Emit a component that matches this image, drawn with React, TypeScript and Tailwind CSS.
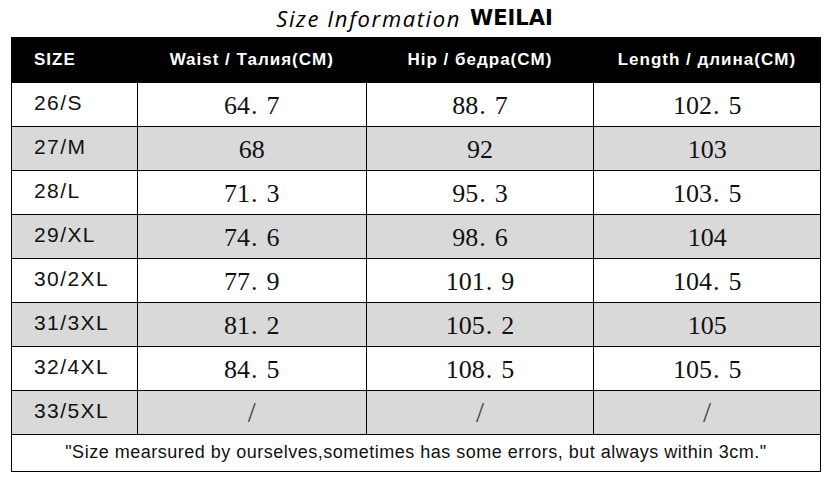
const rows = [
  { size: '26/S', waist: '64.7', hip: '88.7', length: '102.5' },
  { size: '27/M', waist: '68', hip: '92', length: '103' },
  { size: '28/L', waist: '71.3', hip: '95.3', length: '103.5' },
  { size: '29/XL', waist: '74.6', hip: '98.6', length: '104' },
  { size: '30/2XL', waist: '77.9', hip: '101.9', length: '104.5' },
  { size: '31/3XL', waist: '81.2', hip: '105.2', length: '105' },
  { size: '32/4XL', waist: '84.5', hip: '108.5', length: '105.5' },
  { size: '33/5XL', waist: '/', hip: '/', length: '/' },
];

const sans = "font-['Liberation_Sans',Arial,sans-serif]";
const num = "font-['Liberation_Serif',serif] text-[26px] font-normal text-[#111] pt-[2px]";

// SimSun-style wide decimal point
function Num({ v }: { v: string }) {
  if (v === '/') return <span className="font-['Liberation_Serif',serif] text-[29px] text-[#444] leading-none">/</span>;
  const [a, b] = v.split('.');
  if (b === undefined) return <>{a}</>;
  return (
    <>
      {a}
      <span className="ml-[1px] mr-[9px]">.</span>
      {b}
    </>
  );
}

export default function App() {
  return (
    <div className="w-[829px] h-[480px] bg-white overflow-hidden">
      <div className="h-[37px] flex items-center justify-center gap-[9px]">
        <span className="font-['Open_Sans',sans-serif] italic text-[22px] tracking-[1.6px] text-black">
          Size Information
        </span>
        <span className="font-['DejaVu_Sans',sans-serif] font-bold text-[21px] text-black">WEILAI</span>
      </div>

      <table className={`ml-[11px] w-[810px] border-collapse border border-black ${sans}`}>
        <colgroup>
          <col className="w-[126px]" />
          <col className="w-[229px]" />
          <col className="w-[228px]" />
          <col className="w-[227px]" />
        </colgroup>
        <thead>
          <tr className="h-[45px] bg-black text-white text-[17px] tracking-[1px] font-bold">
            <th className="text-left pl-[22px]">SIZE</th>
            <th>Waist / Талия(CM)</th>
            <th>Hip / бедра(CM)</th>
            <th>Length / длина(CM)</th>
          </tr>
        </thead>
        <tbody>
          {rows.map((r, i) => (
            <tr key={r.size} className={`h-[44px] ${i % 2 === 1 ? 'bg-[#d9d9d9]' : 'bg-white'}`}>
              <td className="border border-black pl-[22px] text-[21px] tracking-[1.4px] text-[#111] pb-[4px]">{r.size}</td>
              <td className={`border border-black text-center ${num}`}><Num v={r.waist} /></td>
              <td className={`border border-black text-center ${num}`}><Num v={r.hip} /></td>
              <td className={`border border-black text-center ${num}`}><Num v={r.length} /></td>
            </tr>
          ))}
          <tr className="h-[37px]">
            <td colSpan={4} className="border border-black text-center text-[18px] tracking-[0.5px] text-[#111] pb-[2px]">
              "Size mearsured by ourselves,sometimes has some errors, but always within 3cm."
            </td>
          </tr>
        </tbody>
      </table>
    </div>
  );
}
